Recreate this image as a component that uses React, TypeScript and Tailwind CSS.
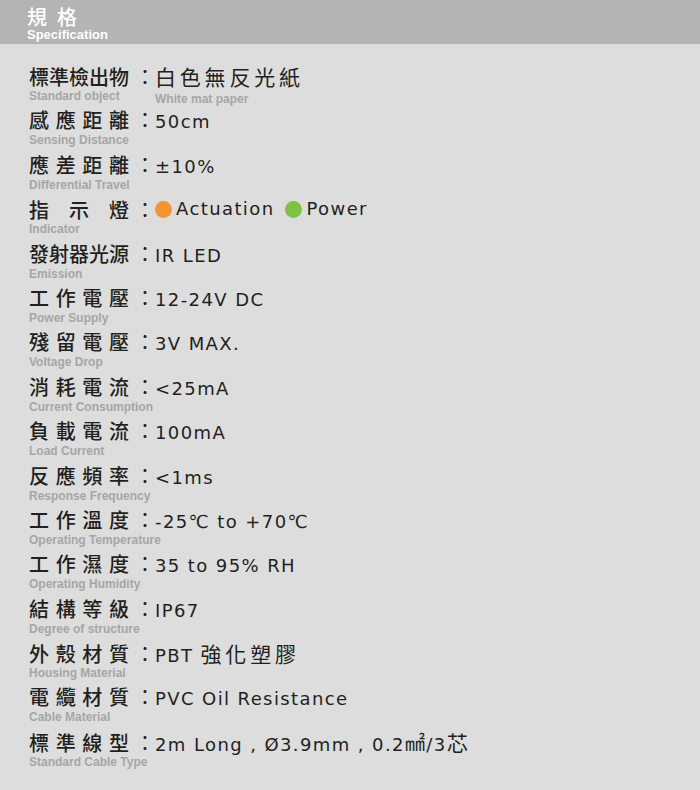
import React from 'react';

type Row = {
  label: string;
  en: string;
  value: React.ReactNode;
  sub?: string;
};

const cjk = "font-['Noto_Sans_CJK_TC','Noto_Sans_CJK_JP',sans-serif]";
const latin = "font-['DejaVu_Sans','Noto_Sans_CJK_TC',sans-serif]";

function Zh({ children }: { children: React.ReactNode }) {
  return <span className={`${cjk} text-[21px] tracking-[3.8px]`}>{children}</span>;
}

function Dot({ color }: { color: string }) {
  return <span className={`inline-block w-[17px] h-[17px] rounded-full self-center ${color}`} />;
}

const rows: Row[] = [
  { label: '標準檢出物', en: 'Standard object', value: <Zh>白色無反光紙</Zh>, sub: 'White mat paper' },
  { label: '感應距離', en: 'Sensing Distance', value: '50cm' },
  { label: '應差距離', en: 'Differential Travel', value: '±10%' },
  {
    label: '指示燈',
    en: 'Indicator',
    value: (
      <span className="flex items-center">
        <Dot color="bg-[#f39433]" />
        <span className="ml-[4px]">Actuation</span>
        <span className="ml-[11px] flex items-center">
          <Dot color="bg-[#7dc242]" />
        </span>
        <span className="ml-[4px]">Power</span>
      </span>
    ),
  },
  { label: '發射器光源', en: 'Emission', value: 'IR LED' },
  { label: '工作電壓', en: 'Power Supply', value: '12-24V DC' },
  { label: '殘留電壓', en: 'Voltage Drop', value: '3V MAX.' },
  { label: '消耗電流', en: 'Current Consumption', value: '<25mA' },
  { label: '負載電流', en: 'Load Current', value: '100mA' },
  { label: '反應頻率', en: 'Response Frequency', value: '<1ms' },
  { label: '工作溫度', en: 'Operating Temperature', value: '-25℃ to +70℃' },
  { label: '工作濕度', en: 'Operating Humidity', value: '35 to 95% RH' },
  { label: '結構等級', en: 'Degree of structure', value: 'IP67' },
  { label: '外殼材質', en: 'Housing Material', value: <>PBT <Zh>強化塑膠</Zh></> },
  { label: '電纜材質', en: 'Cable Material', value: 'PVC Oil Resistance' },
  {
    label: '標準線型',
    en: 'Standard Cable Type',
    value: (
      <>
        2m Long , Ø3.9mm , 0.2<span className={`${cjk} text-[20px]`}>㎟</span>/3<Zh>芯</Zh>
      </>
    ),
  },
];

function SpecRow({ row }: { row: Row }) {
  return (
    <div className="h-[44.4px] flex flex-col">
      <div className="flex items-baseline h-[26px] leading-[26px]">
        <span className={`${cjk} w-[100px] flex justify-between text-[20px] font-medium text-[#231f20]`}>
          {row.label.split('').map((ch, i) => (
            <span key={i}>{ch}</span>
          ))}
        </span>
        <span className={`${cjk} ml-[6px] w-[20px] text-center text-[20px] text-[#231f20]`}>：</span>
        <span className={`${latin} text-[18px] tracking-[1.4px] text-[#231f20] flex items-baseline whitespace-pre`}>
          {row.value}
        </span>
      </div>
      <div className="flex whitespace-nowrap font-['Liberation_Sans',sans-serif] font-bold text-[12px] leading-[14px] text-[#a6a6a6]">
        <span className="w-[126px]">{row.en}</span>
        {row.sub && <span className="mt-[3px]">{row.sub}</span>}
      </div>
    </div>
  );
}

export default function App() {
  return (
    <div className="w-[700px] h-[790px] bg-[#dddddd] overflow-hidden">
      {/* Header */}
      <div className="h-[44px] bg-[#b4b4b4] pl-[27px] pt-[4px]">
        <div className={`${cjk} text-white text-[20px] leading-[25px] font-medium flex gap-[10px]`}>
          <span>規</span>
          <span>格</span>
        </div>
        <div className="font-['Liberation_Sans',sans-serif] font-bold text-white text-[13px] leading-[12px]">
          Specification
        </div>
      </div>

      {/* Spec rows */}
      <div className="pl-[29px] pt-[19px]">
        {rows.map((row, i) => (
          <SpecRow key={i} row={row} />
        ))}
      </div>
    </div>
  );
}
